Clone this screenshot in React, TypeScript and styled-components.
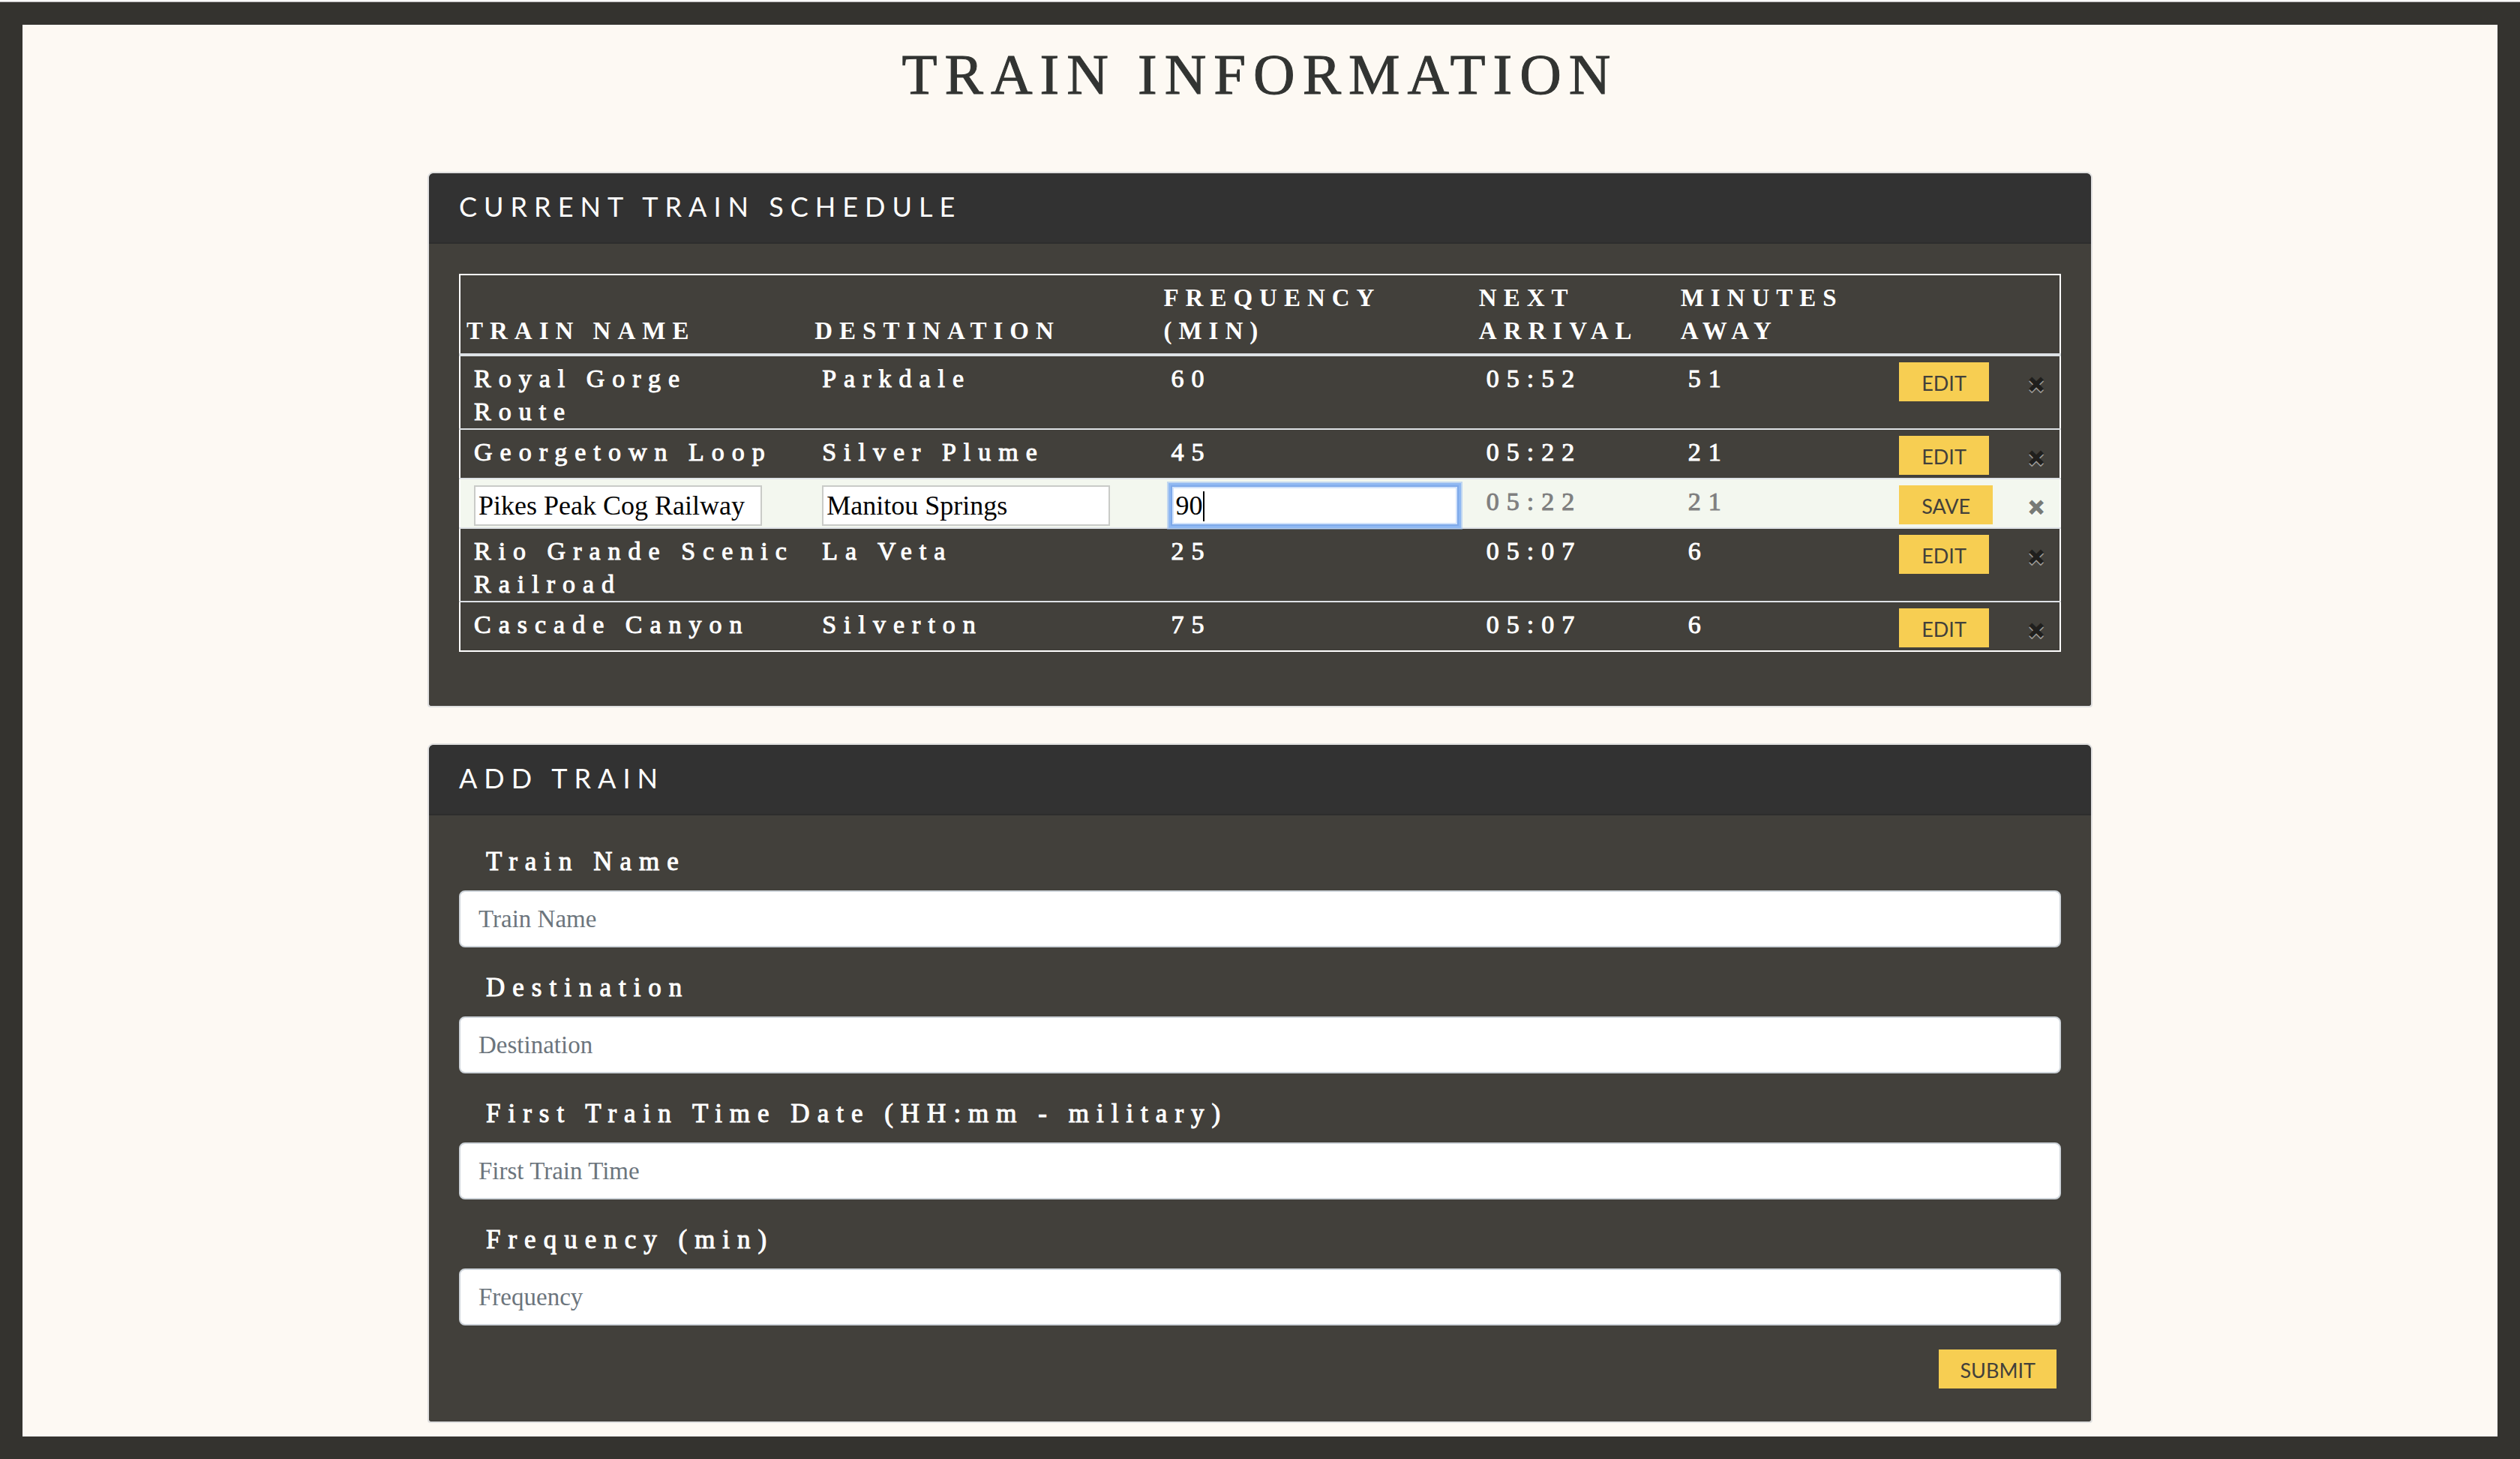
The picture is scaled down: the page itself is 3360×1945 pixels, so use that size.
import React from "react";
import styled, { createGlobalStyle, css } from "styled-components";

const serif = '"Liberation Serif", "Times New Roman", serif';
const sans = 'Lato, "Open Sans", sans-serif';

const colors = {
  frame: "#34332f",
  paper: "#fdf9f3",
  header: "#323232",
  panel: "#42403b",
  line: "#dee2e6",
  highlight: "#f3f7ef",
  accent: "#f7ce52",
};

const GlobalStyle = createGlobalStyle`
  *, *::before, *::after { box-sizing: border-box; }
  body {
    margin: 0;
    background: ${colors.frame};
    font-family: ${serif};
    font-size: 35px;
    line-height: 44px;
    color: #fff;
  }
`;

const Page = styled.div`
  min-height: 100vh;
  display: flex;
  flex-direction: column;
`;

const TopStrip = styled.div`
  height: 3px;
  background: #fafafa;
  border-bottom: 1px solid #b4b2b3;
`;

const Frame = styled.div`
  flex: 1;
  display: flex;
  padding: 30px;
  background: ${colors.frame};
`;

const Main = styled.main`
  flex: 1;
  display: flex;
  flex-direction: column;
  align-items: center;
  padding: 20px 30px 18px;
  background: ${colors.paper};
`;

const Title = styled.h1`
  margin: 0 0 84px;
  font-size: 77px;
  font-weight: 400;
  line-height: 92px;
  letter-spacing: 10px;
  text-transform: uppercase;
  color: #323432;
  -webkit-text-stroke: 1px #323432;
`;

const Stack = styled.div`
  width: 100%;
  max-width: 2220px;
  display: flex;
  flex-direction: column;
  gap: 48px;
`;

const Card = styled.section`
  background: ${colors.panel};
  background-clip: padding-box;
  border: 2px solid #dfdfdf;
  border-radius: 8px 8px 4px 4px;
`;

const CardHeader = styled.h2`
  margin: 0;
  padding: 22px 40px 26px;
  background: ${colors.header};
  border-bottom: 2px solid #2d2d2d;
  border-radius: 6px 6px 0 0;
  font-family: ${sans};
  font-size: 36px;
  font-weight: 400;
  line-height: 44px;
  letter-spacing: 9px;
  text-transform: uppercase;
`;

const CardBody = styled.div`
  padding: 40px;
`;

const Table = styled.table`
  width: 100%;
  margin-bottom: 32px;
  table-layout: fixed;
  border-collapse: collapse;
  border: 2px solid #fff;
`;

const Col = styled.col<{ $share?: string }>`
  width: ${(p) => p.$share ?? "auto"};
`;

const HeadCell = styled.th`
  padding: 8px;
  border-bottom: 4px solid ${colors.line};
  font-size: 33px;
  font-weight: 700;
  letter-spacing: 9px;
  text-align: left;
  text-transform: uppercase;
  vertical-align: bottom;
`;

const Row = styled.tr<{ $editing?: boolean }>`
  border-bottom: 2px solid ${colors.line};
  &:last-child { border-bottom-color: #fff; }
  ${(p) =>
    p.$editing &&
    css`
      background: ${colors.highlight};
      color: #7f7f7f;
    `}
`;

const Cell = styled.td`
  padding: 8px 16px 0 18px;
  font-size: 34px;
  letter-spacing: 10px;
  vertical-align: top;
  -webkit-text-stroke: 1px currentColor;
`;

const ControlCell = styled.td<{ $end?: boolean }>`
  padding: ${(p) => (p.$end ? "8px 18px 4px 0" : "8px 0 4px 20px")};
  line-height: 0;
  text-align: ${(p) => (p.$end ? "right" : "left")};
  vertical-align: top;
`;

const EditorCell = styled.td`
  padding: 8px 0 0 18px;
  line-height: 0;
  vertical-align: top;
`;

const EditorBox = styled.div`
  position: relative;
`;

const CellInput = styled.input<{ $active?: boolean }>`
  display: block;
  width: 384px;
  height: 54px;
  padding: 2px 4px;
  border: 2px solid #c9cbc8;
  border-radius: 0;
  background: #fff;
  color: #000;
  font-family: ${serif};
  font-size: 36px;
  line-height: 44px;
  outline: none;
  ${(p) =>
    p.$active &&
    css`
      border-color: #7ea9ea;
      box-shadow: 0 0 0 3px #8fb8f2, 0 0 0 5px rgba(143, 184, 242, 0.5),
        inset 0 0 0 2px #d2e3fb;
      caret-color: transparent;
    `}
`;

const Caret = styled.span`
  position: absolute;
  top: 8px;
  left: 43px;
  width: 2px;
  height: 40px;
  background: #000;
`;

const ActionButton = styled.button`
  height: 52px;
  padding: 4px 30px 0;
  border: 0;
  background: ${colors.accent};
  color: #42403b;
  font-family: ${sans};
  font-size: 27px;
  line-height: 44px;
  text-transform: uppercase;
  cursor: pointer;
`;

const CloseButton = styled.button`
  height: 52px;
  padding: 4px 0 0;
  border: 0;
  background: transparent;
  color: #000;
  opacity: 0.5;
  font-family: "Open Sans", sans-serif;
  font-size: 44px;
  font-weight: 800;
  line-height: 48px;
  text-shadow: 0 2px 0 #fff;
  cursor: pointer;
`;

const Field = styled.div`
  margin-bottom: 32px;
`;

const Label = styled.label`
  display: block;
  margin: 0 0 16px;
  padding-left: 36px;
  letter-spacing: 10px;
  -webkit-text-stroke: 1px currentColor;
`;

const TextInput = styled.input`
  display: block;
  width: 100%;
  height: 76px;
  padding: 12px 24px;
  border: 2px solid #ced4da;
  border-radius: 8px;
  background: #fff;
  color: #495057;
  font-family: ${serif};
  font-size: 33px;
  line-height: 48px;
  &::placeholder {
    color: #6c757d;
    opacity: 1;
  }
`;

const FormActions = styled.div`
  display: flex;
  justify-content: flex-end;
  padding: 0 6px 4px 0;
`;

const SubmitButton = styled(ActionButton)`
  padding: 4px 28px 0;
`;

const trains = [
  { name: "Royal Gorge Route", destination: "Parkdale", frequency: 60, next: "05:52", away: 51 },
  { name: "Georgetown Loop", destination: "Silver Plume", frequency: 45, next: "05:22", away: 21 },
  { name: "Pikes Peak Cog Railway", destination: "Manitou Springs", frequency: 90, next: "05:22", away: 21, editing: true },
  { name: "Rio Grande Scenic Railroad", destination: "La Veta", frequency: 25, next: "05:07", away: 6 },
  { name: "Cascade Canyon", destination: "Silverton", frequency: 75, next: "05:07", away: 6 },
];

const fields = [
  { id: "train-name", label: "Train Name", placeholder: "Train Name" },
  { id: "destination", label: "Destination", placeholder: "Destination" },
  { id: "first-time", label: "First Train Time Date (HH:mm - military)", placeholder: "First Train Time" },
  { id: "frequency", label: "Frequency (min)", placeholder: "Frequency" },
];

export default function App() {
  return (
    <Page>
      <GlobalStyle />
      <TopStrip />
      <Frame>
        <Main>
          <Title>Train Information</Title>
          <Stack>
            <Card>
              <CardHeader>Current Train Schedule</CardHeader>
              <CardBody>
                <Table>
                  <colgroup>
                    <Col $share="21.8%" />
                    <Col $share="21.8%" />
                    <Col $share="19.7%" />
                    <Col $share="12.6%" />
                    <Col $share="13.1%" />
                    <Col $share="7.3%" />
                    <Col />
                  </colgroup>
                  <thead>
                    <tr>
                      <HeadCell scope="col">Train Name</HeadCell>
                      <HeadCell scope="col">Destination</HeadCell>
                      <HeadCell scope="col">Frequency (min)</HeadCell>
                      <HeadCell scope="col">Next Arrival</HeadCell>
                      <HeadCell scope="col">Minutes Away</HeadCell>
                      <HeadCell />
                      <HeadCell />
                    </tr>
                  </thead>
                  <tbody>
                    {trains.map((t) => (
                      <Row key={t.name} $editing={t.editing}>
                        {t.editing ? (
                          <>
                            <EditorCell>
                              <CellInput aria-label="Train name" defaultValue={t.name} />
                            </EditorCell>
                            <EditorCell>
                              <CellInput aria-label="Destination" defaultValue={t.destination} />
                            </EditorCell>
                            <EditorCell>
                              <EditorBox>
                                <CellInput aria-label="Frequency" defaultValue={t.frequency} $active />
                                <Caret />
                              </EditorBox>
                            </EditorCell>
                          </>
                        ) : (
                          <>
                            <Cell>{t.name}</Cell>
                            <Cell>{t.destination}</Cell>
                            <Cell>{t.frequency}</Cell>
                          </>
                        )}
                        <Cell>{t.next}</Cell>
                        <Cell>{t.away}</Cell>
                        <ControlCell>
                          <ActionButton type="button">{t.editing ? "Save" : "Edit"}</ActionButton>
                        </ControlCell>
                        <ControlCell $end>
                          <CloseButton type="button" aria-label={`Remove ${t.name}`}>
                            ×
                          </CloseButton>
                        </ControlCell>
                      </Row>
                    ))}
                  </tbody>
                </Table>
              </CardBody>
            </Card>
            <Card>
              <CardHeader>Add Train</CardHeader>
              <CardBody as="form">
                {fields.map((f) => (
                  <Field key={f.id}>
                    <Label htmlFor={f.id}>{f.label}</Label>
                    <TextInput id={f.id} type="text" placeholder={f.placeholder} />
                  </Field>
                ))}
                <FormActions>
                  <SubmitButton type="button">Submit</SubmitButton>
                </FormActions>
              </CardBody>
            </Card>
          </Stack>
        </Main>
      </Frame>
    </Page>
  );
}
